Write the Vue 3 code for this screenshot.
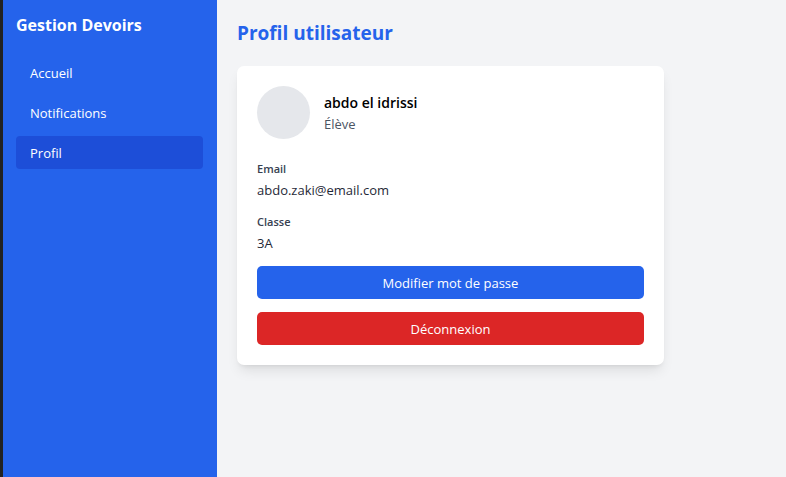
<script setup>
import { ref } from 'vue'

const links = [
  { id: 'accueil', label: 'Accueil' },
  { id: 'notifications', label: 'Notifications' },
  { id: 'profil', label: 'Profil' },
]
const current = ref('profil')

const user = { name: 'abdo el idrissi', role: 'Élève' }
const fields = [
  { label: 'Email', value: 'abdo.zaki@email.com' },
  { label: 'Classe', value: '3A' },
]
</script>

<template>
  <div class="layout">
    <aside class="sidebar">
      <p class="brand">Gestion Devoirs</p>
      <nav class="nav">
        <a
          v-for="link in links"
          :key="link.id"
          :href="`#${link.id}`"
          class="nav-link"
          :class="{ active: current === link.id }"
          @click="current = link.id"
        >{{ link.label }}</a>
      </nav>
    </aside>

    <main class="content">
      <h1 class="title">Profil utilisateur</h1>
      <section class="card">
        <header class="identity">
          <div class="avatar"></div>
          <div>
            <h2 class="name">{{ user.name }}</h2>
            <p class="role">{{ user.role }}</p>
          </div>
        </header>
        <dl class="fields">
          <div v-for="field in fields" :key="field.label" class="field">
            <dt>{{ field.label }}</dt>
            <dd>{{ field.value }}</dd>
          </div>
        </dl>
        <div class="actions">
          <button type="button" class="btn primary">Modifier mot de passe</button>
          <button type="button" class="btn danger">Déconnexion</button>
        </div>
      </section>
    </main>
  </div>
</template>

<style>
body {
  margin: 0;
}
</style>

<style scoped>
.layout {
  display: flex;
  box-sizing: border-box;
  min-height: 100vh;
  border-left: 3px solid #222222;
  background: #f3f4f6;
  color: #1f2937;
  font-family: "Segoe UI", "Open Sans", "Noto Sans", sans-serif;
  font-size: 13px;
  line-height: 20px;
}

.sidebar {
  flex: none;
  box-sizing: border-box;
  width: 214px;
  padding: 14px 14px 14px 13px;
  background: #2563eb;
  color: #ffffff;
}

.brand {
  margin: 0 0 19px;
  font-size: 16px;
  line-height: 23px;
  font-weight: 700;
}

.nav {
  display: flex;
  flex-direction: column;
  gap: 7px;
}

.nav-link {
  padding: 7px 14px 6px;
  border-radius: 4px;
  color: inherit;
  text-decoration: none;
}

.nav-link.active {
  background: #1d4ed8;
}

.content {
  flex: 1;
  min-width: 0;
  padding: 20px;
}

.title {
  margin: 0 0 20px;
  color: #2563eb;
  font-size: 19px;
  line-height: 26px;
  font-weight: 700;
}

.card {
  box-sizing: border-box;
  max-width: 427px;
  padding: 20px;
  border-radius: 7px;
  background: #ffffff;
  box-shadow: 0 8px 13px -3px rgba(0, 0, 0, 0.1), 0 3px 5px -3px rgba(0, 0, 0, 0.1);
}

.identity {
  display: flex;
  align-items: center;
  gap: 14px;
  margin-bottom: 21px;
}

.avatar {
  flex: none;
  width: 53px;
  height: 53px;
  border-radius: 50%;
  background: #e5e7eb;
}

.name {
  margin: 0;
  color: #000000;
  font-size: 14px;
  line-height: 23px;
  font-weight: 600;
}

.role {
  margin: 0;
  color: #4b5563;
}

.fields {
  display: flex;
  flex-direction: column;
  gap: 13px;
  margin: 0 0 13px;
}

.field {
  display: flex;
  flex-direction: column;
  gap: 3px;
}

.field dt {
  color: #374151;
  font-size: 11px;
  line-height: 17px;
  font-weight: 600;
}

.field dd {
  margin: 0;
}

.actions {
  display: flex;
  flex-direction: column;
  gap: 13px;
}

.btn {
  padding: 7px 13px 6px;
  border: 0;
  border-radius: 5px;
  color: #ffffff;
  font: inherit;
  cursor: pointer;
}

.primary {
  background: #2563eb;
}

.danger {
  background: #dc2626;
}
</style>
